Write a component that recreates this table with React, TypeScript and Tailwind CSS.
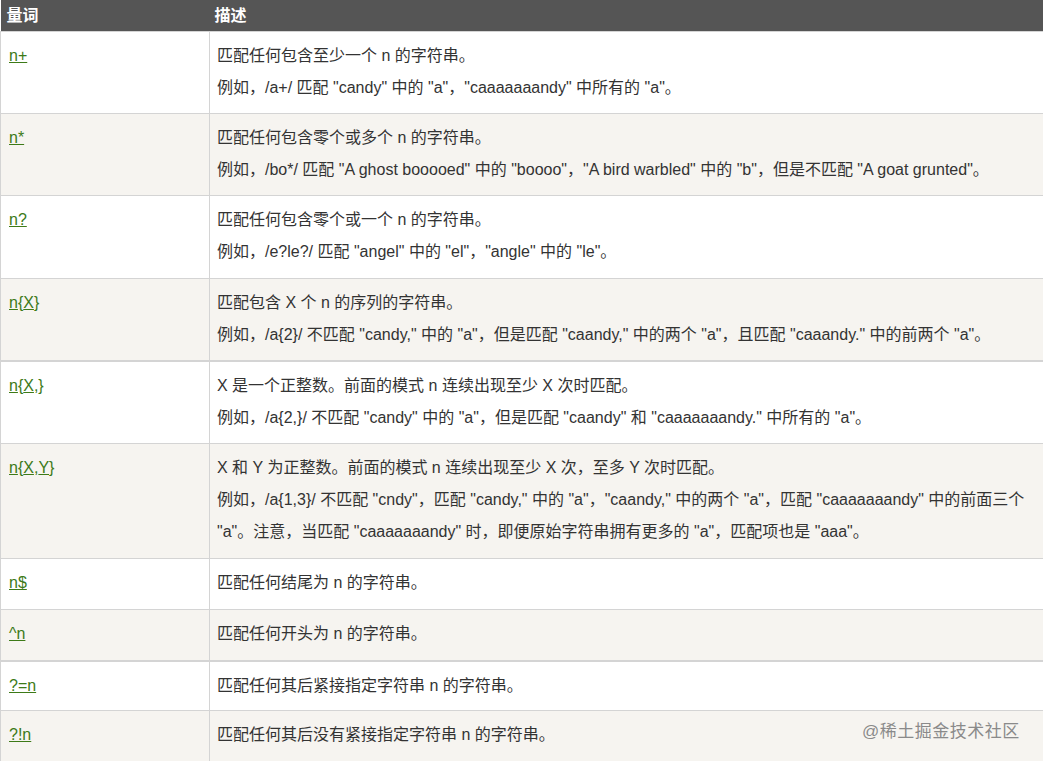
import React from 'react';

const font = { fontFamily: '"Liberation Sans", "Noto Sans CJK SC", sans-serif' };

type Row = { q: React.ReactNode; desc: string[]; alt?: boolean; thick?: boolean; pb: string };

const L = ({ children }: { children: React.ReactNode }) => <span className="underline">{children}</span>;

const rows: Row[] = [
  { q: <L>n+</L>, pb: 'pb-[9px]', desc: ['匹配任何包含至少一个 n 的字符串。', '例如，/a+/ 匹配 "candy" 中的 "a"，"caaaaaaandy" 中所有的 "a"。'] },
  { q: <L>n*</L>, alt: true, pb: 'pb-[9px]', desc: ['匹配任何包含零个或多个 n 的字符串。', '例如，/bo*/ 匹配 "A ghost booooed" 中的 "boooo"，"A bird warbled" 中的 "b"，但是不匹配 "A goat grunted"。'] },
  { q: <L>n?</L>, pb: 'pb-[10px]', desc: ['匹配任何包含零个或一个 n 的字符串。', '例如，/e?le?/ 匹配 "angel" 中的 "el"，"angle" 中的 "le"。'] },
  { q: <><L>n</L>{'{'}<L>X</L>{'}'}</>, alt: true, pb: 'pb-[9px]', desc: ['匹配包含 X 个 n 的序列的字符串。', '例如，/a{2}/ 不匹配 "candy," 中的 "a"，但是匹配 "caandy," 中的两个 "a"，且匹配 "caaandy." 中的前两个 "a"。'] },
  { q: <><L>n</L>{'{'}<L>X</L>{',}'}</>, thick: true, pb: 'pb-[9px]', desc: ['X 是一个正整数。前面的模式 n 连续出现至少 X 次时匹配。', '例如，/a{2,}/ 不匹配 "candy" 中的 "a"，但是匹配 "caandy" 和 "caaaaaaandy." 中所有的 "a"。'] },
  { q: <><L>n</L>{'{'}<L>X</L>,<L>Y</L>{'}'}</>, alt: true, pb: 'pb-[10px]', desc: ['X 和 Y 为正整数。前面的模式 n 连续出现至少 X 次，至多 Y 次时匹配。', '例如，/a{1,3}/ 不匹配 "cndy"，匹配 "candy," 中的 "a"，"caandy," 中的两个 "a"，匹配 "caaaaaaandy" 中的前面三个 "a"。注意，当匹配 "caaaaaaandy" 时，即便原始字符串拥有更多的 "a"，匹配项也是 "aaa"。'] },
  { q: <L>n$</L>, pb: 'pb-[10px]', desc: ['匹配任何结尾为 n 的字符串。'] },
  { q: <L>^n</L>, alt: true, pb: 'pb-[10px]', desc: ['匹配任何开头为 n 的字符串。'] },
  { q: <L>?=n</L>, thick: true, pb: 'pb-[8px]', desc: ['匹配任何其后紧接指定字符串 n 的字符串。'] },
  { q: <L>?!n</L>, alt: true, pb: 'pb-[10px]', desc: ['匹配任何其后没有紧接指定字符串 n 的字符串。'] },
];

export default function App() {
  return (
    <div className="relative w-[1043px] h-[762px] overflow-hidden bg-white" style={font}>
      <table className="w-[1045px] border-collapse text-[16px] text-[#333] table-fixed">
        <colgroup>
          <col className="w-[209px]" />
          <col />
        </colgroup>
        <thead>
          <tr className="bg-[#555555] text-white h-[31px]">
            <th className="text-left font-bold text-[16px] pl-[6px] leading-[31px] py-0">量词</th>
            <th className="text-left font-bold text-[16px] pl-[5px] leading-[31px] py-0">描述</th>
          </tr>
        </thead>
        <tbody>
          {rows.map((r, i) => (
            <tr key={i} className={`${r.alt ? 'bg-[#f6f4f0]' : 'bg-white'} ${r.thick ? 'border-t-2' : 'border-t'} border-[#d4d4d4]`}>
              <td className={`align-top border-l border-r border-[#d4d4d4] pl-[8px] pt-[8px] ${r.pb} leading-[32px] text-[#3d7a18]`}>{r.q}</td>
              <td className={`align-top border-r border-[#d4d4d4] pl-[7px] pr-[4px] pt-[8px] ${r.pb} leading-[32px]`}>
                {r.desc.map((d, j) => <p key={j}>{d}</p>)}
              </td>
            </tr>
          ))}
        </tbody>
      </table>
      <div className="absolute left-[862px] top-[719px] text-[17px] text-[#8a8a8a] tracking-[0.5px]">@稀土掘金技术社区</div>
    </div>
  );
}
